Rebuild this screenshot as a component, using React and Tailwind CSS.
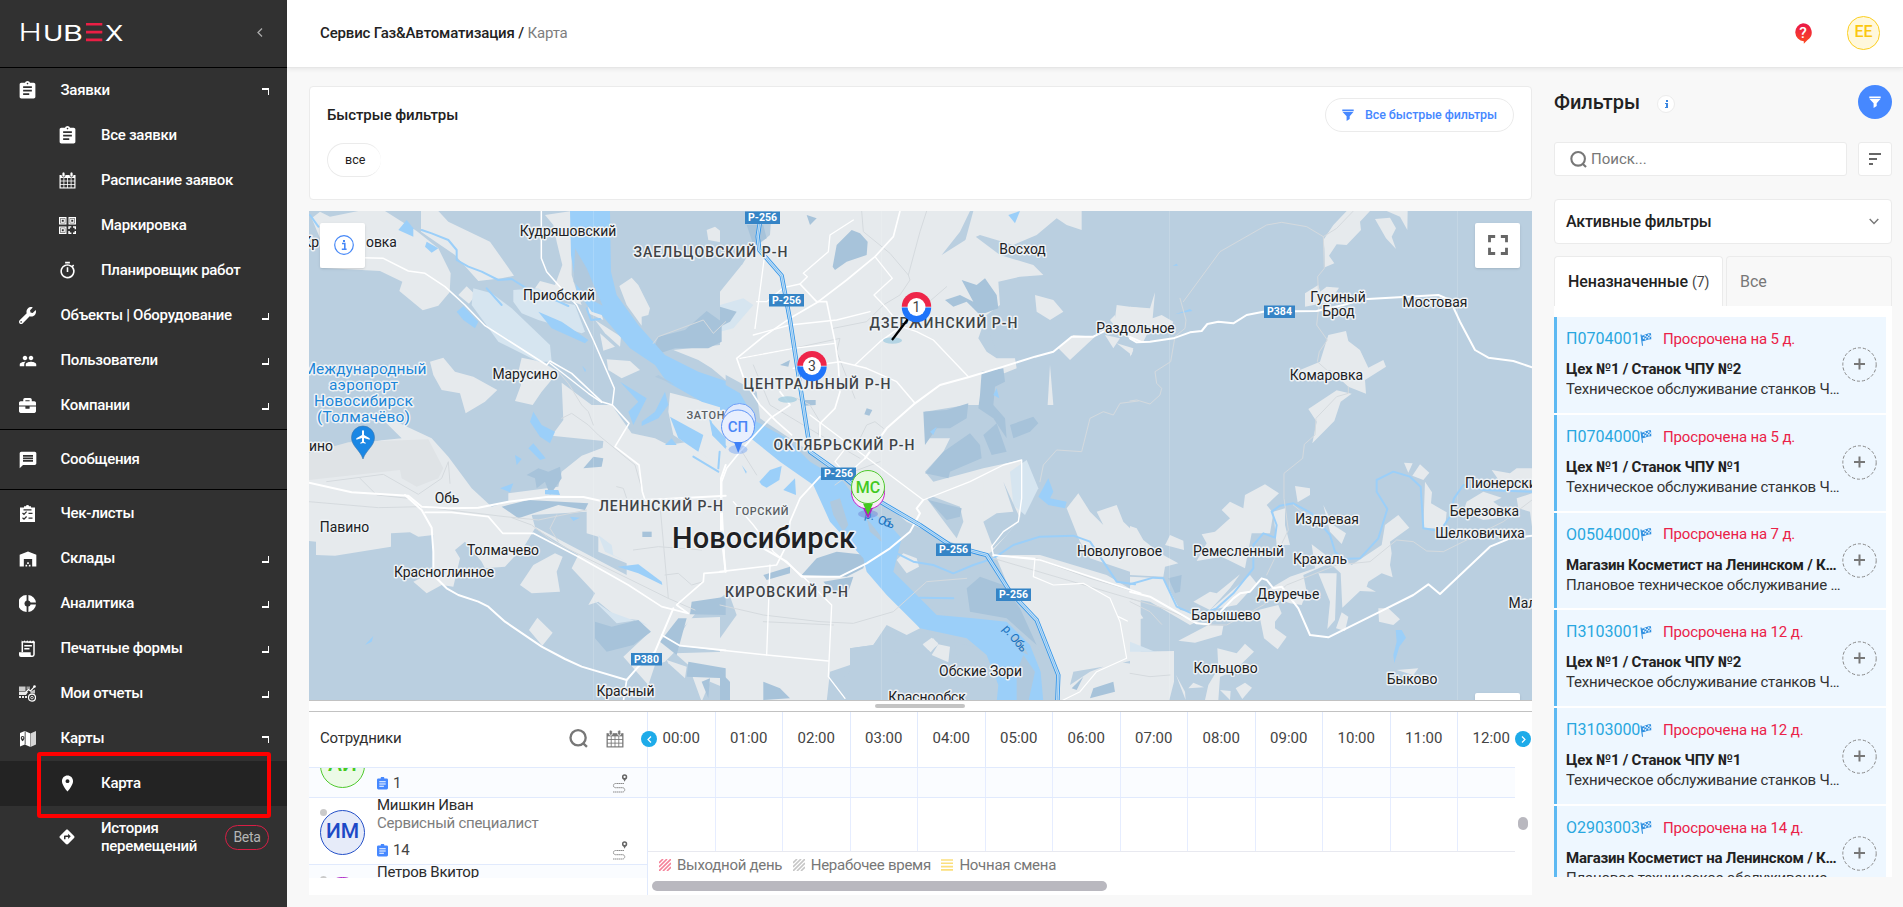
import React from "react";
import {
  MdAssignment, MdOutlineTimer, MdPeople, MdMessage, MdWarehouse, MdPlace, MdDirections, MdFullscreen, MdLocalAirport,
} from "react-icons/md";
import { FaWrench, FaBriefcase } from "react-icons/fa";

/* ---------- icons ---------- */
const Svg = ({ s = 17, vb = "0 0 17 17", className = "", children }) => (
  <svg width={s} height={s} viewBox={vb} className={`shrink-0 ${className}`} fill="currentColor">{children}</svg>
);
const CalendarIcon = ({ s = 17, hole = "#313131" }) => (
  <Svg s={s}>
    <path d="M.5 3h16v13.500H.5z" />
    <rect x="3" y="0" width="3" height="5" rx="1.500" stroke={hole} strokeWidth=".8" />
    <rect x="11" y="0" width="3" height="5" rx="1.500" stroke={hole} strokeWidth=".8" />
    <g fill={hole}>
      {[6, 9.4, 12.8].map((y) => [1.7, 5.3, 8.9, 12.5].map((x) => <rect key={`${x}-${y}`} x={x} y={y} width="2.800" height="2.600" />))}
    </g>
  </Svg>
);
const QrIcon = () => (
  <Svg>
    {[[0, 0], [9.5, 0], [0, 9.5]].map(([x, y]) => (
      <g key={`${x}${y}`}>
        <rect x={x + 0.6} y={y + 0.6} width="6.300" height="6.300" fill="none" stroke="currentColor" strokeWidth="1.200" />
        <rect x={x + 2.2} y={y + 2.2} width="3.100" height="3.100" fill="none" stroke="currentColor" strokeWidth="1.100" />
      </g>
    ))}
    <path d="M9.300 9.300h3v1.300h-1.500v1.500H9.300zM14 9.300h3v3h-1.400v-1.500H14zM9.300 14h1.500v1.500h1.600V17H9.300zM15.600 14H17v3h-3v-1.400h1.600z" />
  </Svg>
);
const ChecklistIcon = () => (
  <Svg>
    <path d="M1 2.500h4V1.300h1.800a1.800 1.800 0 0 1 3.400 0H12v1.200h4V17H1z" />
    <g fill="none" stroke="#313131" strokeWidth="1.200">
      <path d="M4.500 4.800h8M3.500 8l1.500 1.400L7.600 6.700M3.500 12.800L5 14.200l2.600-2.700M9.500 8.400h4M9.500 13.200h4" />
    </g>
  </Svg>
);
const DonutIcon = () => (
  <Svg>
    <path d="M7.600 0v5.400a3.300 3.300 0 0 0 0 6.200V17A8.500 8.500 0 0 1 7.600 0zM9.400 0A8.500 8.500 0 0 1 17 7.600h-5.400a3.300 3.300 0 0 0-2.200-2.200zM9.400 17A8.500 8.500 0 0 0 17 9.400h-5.400a3.300 3.300 0 0 1-2.200 2.200z" />
  </Svg>
);
const FormIcon = () => (
  <Svg>
    <path fill="none" stroke="currentColor" strokeWidth="1.500" d="M3.300 12V2M15 2v12.500a1.700 1.700 0 0 1-1.700 1.700H3" />
    <path d="M2.600 2.600V.5l1.500 1L5.500.5l1.400 1 1.400-1 1.500 1 1.400-1 1.500 1 1.400-1 1.600 1v1.800zM5.300 5h7.600v1.500H5.300zM5.300 8h5.200v1.500H5.300zM0 12.300h11.700v2.500c0 .8.6 1.200 1.200 1.200v1H2a2 2 0 0 1-2-2z" />
  </Svg>
);
const ReportIcon = () => (
  <Svg>
    <path opacity=".75" d="M0 1.500h6.500v5H0z" />
    <path d="M0 7h9L7 10H0zM0 11h2v2H0zM3 11h2v2H3zM6 11h2v2H6z" opacity=".9" />
    <path d="M7.500 1.500H11v3H7.500z" opacity=".5" />
    <path d="M6.500 7.500l3-3 2 1.500 4-4.300" fill="none" stroke="currentColor" strokeWidth="1.200" />
    <circle cx="15.500" cy="1.500" r="1.300" />
    <path d="M11.500 6.500l4.500-2v4h-4.500z" opacity=".7" />
    <circle cx="13" cy="12.600" r="3.500" fill="none" stroke="currentColor" strokeWidth="1.200" />
    <circle cx="13" cy="12.600" r="1.300" fill="none" stroke="currentColor" strokeWidth=".8" />
  </Svg>
);
const MapIcon = () => (
  <Svg>
    <path d="M1 3l4.800-2v13.500L1 16.500z" />
    <path d="M5.800 1l5.700 2.500V17l-5.700-2.500z" />
    <path d="M12 3.200L17 1v13.500l-5 2.200z" opacity=".8" />
    <path d="M6.300 1.500v13" stroke="#313131" strokeWidth=".7" />
    <path d="M3.600 6a1.900 1.900 0 0 1 1.900 1.900c0 1.300-1.900 3.300-1.900 3.300S1.700 9.200 1.700 7.900A1.900 1.900 0 0 1 3.600 6z" fill="#313131" />
    <circle cx="3.600" cy="7.900" r=".8" />
  </Svg>
);
const Funnel = ({ s = 12 }) => (
  <Svg s={s} vb="0 0 12 12"><path d="M.3.5h11.400v1.700H.3zM.6 3h10.800L7.700 7.300v2.800L4.600 12V7.300z" /></Svg>
);
const SearchIcon = ({ s = 18 }) => (
  <Svg s={s} vb="0 0 18 18"><g fill="none" stroke="currentColor" strokeWidth="2.200"><circle cx="8.600" cy="8.300" r="7.200" /><path d="M13 13.200l4 3.800" /></g></Svg>
);
const FlagIcon = () => (
  <Svg s={13} vb="0 0 13 13">
    <path d="M1 1.500L2.500 12.800" stroke="#2f8fe0" strokeWidth="1.100" fill="none" />
    <path d="M1.200 2.500C4 2.800 6 .3 11 .3l.3 6C7 6.300 5 8.300 2 8.300z" fill="#2f8fe0" />
    <path d="M4.300 2.300l1.500-.6.300 1.500-1.500.6zM7.800 1.200l1.500-.3.200 1.500-1.500.3zM2.700 4.300l1.500-.4.300 1.500-1.500.5zM6.200 3.200l1.600-.5.300 1.500-1.600.5zM9.500 2.400l1.300-.2.200 1.600-1.300.1zM4.700 5.400l1.500-.6.200 1.500-1.500.6zM8.100 4.200l1.500-.3.200 1.500-1.500.3z" fill="#eef7ff" />
  </Svg>
);
const RouteIcon = () => (
  <svg width="16" height="19" viewBox="0 0 16 19" fill="none" stroke="#8b8b8b" strokeWidth="1" className="shrink-0">
    <circle cx="12.600" cy="2.900" r="1.900" strokeWidth="1.500" stroke="#666" />
    <path d="M11.200 4.800l1.400 3 1.400-3z" fill="#666" stroke="none" />
    <path d="M12 9.500H3.500a2 2 0 0 0 0 4.200H11a2.200 2.200 0 0 1 0 4.300H1" strokeDasharray="1.600 .4" />
  </svg>
);

/* ---------- sidebar ---------- */
const Row = ({ icon, label, sub, arrow, active }) => (
  <div className={`flex h-[45px] shrink-0 items-center ${sub ? "pl-[59px]" : "pl-[19px]"} pr-[18px] ${active ? "bg-[#232323]" : ""}`}>
    <span className="flex w-[17px] justify-center">{icon}</span>
    <span className={`flex-1 whitespace-nowrap ${sub ? "pl-[25px]" : "pl-[24.500px]"}`}>{label}</span>
    {arrow && <span className={`mt-px h-[7px] w-[7px] border-white ${arrow === "open" ? "border-r border-t-2" : "border-b-2 border-r"}`} />}
  </div>
);

function Sidebar() {
  return (
    <aside className="relative flex w-[287px] shrink-0 flex-col bg-[#313131] text-[15px] font-medium tracking-[-0.28px] text-white">
      <div className="flex h-[68px] shrink-0 items-center justify-between border-b border-black pl-5 pr-[24px]">
        <svg width="104" height="26" viewBox="20 19 104 26" className="-mt-[3px] overflow-visible" fontFamily="Inter, sans-serif" fill="#fff">
          <text x="18.500" y="41.200" fontSize="24.500" fontWeight="300" textLength="23" lengthAdjust="spacingAndGlyphs">H</text>
          <text x="43" y="41.200" fontSize="21.500" fontWeight="400" textLength="20" lengthAdjust="spacingAndGlyphs">U</text>
          <text x="63" y="41.200" fontSize="21.500" fontWeight="400" textLength="19.500" lengthAdjust="spacingAndGlyphs">B</text>
          <g fill="#ea1f45"><path d="M86 23h16.300v2.600H86zM86 30.800h16.300v2.600H86zM86 38.600h16.300v2.600H86z" /></g>
          <text x="105" y="41.200" fontSize="21.500" fontWeight="400" textLength="18" lengthAdjust="spacingAndGlyphs">X</text>
        </svg>
        <svg width="6" height="9" viewBox="0 0 6 9" fill="none" stroke="#aaa" strokeWidth="1.300" className="-mt-[3px]"><path d="M5 .5L1 4.500l4 4" /></svg>
      </div>
      <Row icon={<MdAssignment size={21} className="shrink-0" />} label="Заявки" arrow="open" />
      <Row sub icon={<MdAssignment size={21} className="shrink-0" />} label="Все заявки" />
      <Row sub icon={<CalendarIcon />} label="Расписание заявок" />
      <Row sub icon={<QrIcon />} label="Маркировка" />
      <Row sub icon={<MdOutlineTimer size={19} className="shrink-0" />} label="Планировщик работ" />
      <Row icon={<FaWrench size={17} />} label="Объекты | Оборудование" arrow="shut" />
      <Row icon={<MdPeople size={18} className="shrink-0 -scale-x-100" />} label="Пользователи" arrow="shut" />
      <Row icon={<FaBriefcase size={17} />} label="Компании" arrow="shut" />
      <div className="mt-px flex h-[61px] shrink-0 items-center border-y border-black">
        <div className="w-full"><Row icon={<MdMessage size={20} className="shrink-0" />} label="Сообщения" /></div>
      </div>
      <div className="h-px shrink-0" />
      <Row icon={<ChecklistIcon />} label="Чек-листы" />
      <Row icon={<MdWarehouse size={20} className="shrink-0" />} label="Склады" arrow="shut" />
      <Row icon={<DonutIcon />} label="Аналитика" arrow="shut" />
      <Row icon={<FormIcon />} label="Печатные формы" arrow="shut" />
      <Row icon={<ReportIcon />} label="Мои отчеты" arrow="shut" />
      <Row icon={<MapIcon />} label="Карты" arrow="open" />
      <Row sub active icon={<MdPlace size={19} className="shrink-0" />} label="Карта" />
      <div className="flex h-[62px] shrink-0 items-center pl-[58px] pr-[18px]">
        <MdDirections size={18} className="shrink-0" />
        <span className="flex-1 pl-[25px] leading-[18px]">История<br />перемещений</span>
        <span className="flex h-[25px] w-11 items-center justify-center rounded-full border border-[#d81e45] text-sm font-normal text-[#b5b5b5]">Beta</span>
      </div>
      <div className="absolute left-[37px] top-[752px] h-[66px] w-[234px] rounded-[3px] border-4 border-[#ff0000]" />
    </aside>
  );
}

/* ---------- map ---------- */
const FRAMES = { A: "translate(305 205) scale(.33333)", B: "translate(720 205) scale(.33333)", C: "translate(1130 205) scale(.33333)" };

const AREAS = [
  ["land", {
    A: [
      "20,40 45,20 75,35 160,18 240,18 335,78 400,130 437,205 434,262 400,302 353,316 283,258 292,230 225,198 45,188 45,100",
      "348,18 400,18 430,50 555,110 627,212 590,220 520,228 450,150 348,80",
      "485,244 512,270 492,296 460,270",
      "720,30 800,18 800,210 812,250 830,300 750,270 690,250 705,228 750,240 772,180 755,110 745,60",
      "375,470 415,458 450,500 505,515 577,555 540,590 482,625 465,565 410,555 385,510",
      "650,458 710,470 760,500 710,560 683,600 630,588 648,540 640,500",
      "980,218 1000,240 1035,310 1030,330 1010,335 1010,362 965,300 943,243",
      "850,305 885,312 895,345 850,325", "870,345 948,395 945,425 900,385", "885,385 930,425 895,437", "905,463 975,468 1005,495 950,520 910,495",
      "1205,75 1230,65 1262,90 1262,115 1210,105",
      "1105,435 1245,420 1262,415 1262,525 1220,490 1180,465",
      "1095,563 1200,590 1262,610 1262,815 1195,750 1105,690 1090,620",
      "12,745 230,706 290,700 210,620 380,700 430,755 500,850 560,905 610,890 610,865 760,845 770,800 830,752 893,728 895,708 740,692 775,645 770,533 860,600 920,600 980,685 1050,700 1090,720 1150,710 1262,805 1262,1190 1200,1190 1160,1240 1115,1290 1120,1330 1080,1370 1050,1380 1030,1440 955,1355 1035,1280 1000,1245 940,1240 880,1190 850,1200 870,1165 800,1090 820,1050 690,970 660,1020 600,1085 540,1090 530,1070 480,1010 450,1035 465,1060 445,1145 410,1140 365,1165 325,1130 385,1100 385,990 340,995 315,982 258,985 258,1025 90,1052 33,1050 33,1010 12,1008",
      "645,1140 685,1080 750,1045 773,1055 755,1100 765,1160 680,1165",
      "697,1238 743,1283 712,1322 672,1275",
      "1110,1345 1262,1340 1262,1450 1215,1430 1190,1490 1150,1380", "1085,1365 1145,1385 1140,1420 1090,1375", "1120,1300 1155,1240 1262,1235 1262,1340 1110,1320",
    ],
    B: [
      "155,18 750,18 720,80 665,150 760,90 840,150 940,180 970,210 900,215 835,230 840,300 800,330 775,400 800,440 830,460 885,460 890,490 790,530 780,600 740,600 615,620 615,700 690,700 670,740 615,800 640,830 790,790 905,765 910,840 900,940 860,990 815,1040 780,1060 690,1010 560,950 490,890 400,830 270,740 120,640 110,560 0,500 0,330 60,300 100,250 60,190 90,140 150,90",
      "0,260 65,180 110,240 100,300 40,380 60,440 0,460",
      "760,18 1085,18 1085,75 1040,60 1010,40 950,90 880,120 780,90 735,110",
      "0,600 60,650 240,800 300,830 400,1000 500,1140 600,1270 560,1290 500,1260 460,1320 390,1330 390,1380 330,1400 320,1490 0,1490",
      "815,1050 960,1050 1160,1110 1262,1170 1262,1360 1180,1380 1060,1400 1050,1440 1110,1400 1190,1370 1262,1380 1262,1490 1020,1490 1010,1390 950,1240 870,1170",
      "1190,300 1262,310 1262,400 1180,380", "945,270 1000,285 1030,320 990,345 950,320", "1015,430 1060,390 1125,395 1050,465",
      "983,600 990,480 1000,600", "1155,390 1200,400 1180,430", "1190,415 1240,430 1235,450", "1170,345 1185,330 1190,370",
      "1040,910 1075,865 1110,920 1150,960 1130,920 1190,900 1210,950 1262,1000 1262,1110 1230,1100 1110,1060 1080,1010",
      "530,1065 590,1060 595,1090 560,1105", "610,1320 640,1300 655,1320 635,1345", "635,1355 660,1320 690,1330 680,1370", "550,1350 590,1370 600,1440 520,1420",
      "615,880 790,830 790,950 710,1000 650,940",
    ],
    C: [
      "580,105 610,60 650,18 720,18 690,50 693,75 650,120 620,118 597,152 613,175 585,187 583,130", "735,42 780,38 798,70 785,95 798,132 768,100", "770,18 833,18 832,75 810,35",
      "0,305 60,310 75,262 68,340 95,330 130,350 120,375 60,370 40,410 0,405",
      "525,265 565,240 570,260 590,245 627,248 600,290 525,305", "0,435 10,435 0,455",
      "595,390 648,378 655,408 690,435 715,488 760,465 768,485 705,525 708,566 655,545 600,495 515,520 510,495 570,470",
      "535,612 620,556 665,566 632,590 613,648 547,715 560,650",
      "822,773 848,775 835,803", "870,778 898,803 880,825 847,812", "885,830 906,862 903,895 950,922 945,970 880,970",
      "1085,795 1140,805 1160,790 1206,790 1206,850 1140,855 1110,830", "1010,890 1060,860 1115,878 1090,890 1110,905 1100,940 1060,945 1000,920", "1160,880 1206,865 1206,965 1200,920 1165,910",
      "495,843 540,850 540,870 503,892", "275,915 300,890 340,910 345,870 405,838 447,865 410,900 430,925 420,985 365,985 345,1090 275,1055 200,1068 230,1015 215,988 255,980 300,940",
      "430,920 465,910 465,960 480,1020 440,1020", "108,1015 120,990 160,1007 162,1035 105,1020",
      "0,963 20,970 40,1005 90,1045 145,1075 105,1085 100,1115 0,1110", "0,1115 100,1120 150,1215 215,1225 230,1235 180,1260 60,1190 0,1180", "0,1180 40,1240 0,1250",
      "190,1190 240,1160 260,1165 330,1108 300,1150 240,1215", "240,1215 360,1110 380,1135 320,1200",
      "145,1307 235,1260 280,1262 275,1290 195,1313", "385,1215 445,1200 455,1225 435,1250 435,1270 470,1295 443,1333 402,1300",
      "395,1165 480,1115 555,1090 545,1018 600,1060 625,1050 665,1080 755,1020 765,960 805,930 838,968 780,1010 785,1045 780,1080 788,1117 755,1105 715,1130 710,1145 738,1160 690,1158 637,1208 632,1105 600,1075 520,1110 530,1160 515,1200 480,1195",
      "565,1105 620,1105 615,1245 592,1272 600,1190", "635,1222 655,1235 645,1278 618,1270", "745,1210 775,1210 810,1243 790,1260 747,1250",
      "580,900 610,960 648,985 635,1017 600,980",
      "262,1330 320,1345 345,1316 372,1340 310,1400 270,1415 265,1485 225,1485 235,1440 265,1390", "175,1450 190,1433 222,1447", "270,1455 302,1458 300,1485", "317,1450 345,1433 366,1448 337,1482",
      "0,1340 132,1338 132,1430 118,1485 0,1485", "138,1410 165,1460 167,1485", "800,1395 865,1390 850,1410",
    ],
  }],
  ["light", {
    A: ["505,250 560,265 620,310 735,420 740,470 700,470 580,410 540,355 500,300", "625,255 700,250 760,290 810,300 840,380 830,385 750,360 700,345 650,325 625,290", "865,1185 915,1220 1030,1262 1000,1245 935,1255", "880,990 920,1020 925,1050 965,1070 900,1040"],
    B: ["870,800 920,765 955,850 915,930 880,900", "525,1010 550,1000 690,1040 640,1060 600,1050 560,1050", "0,300 70,280 100,300 40,370 0,380"],
    C: ["0,1310 75,1340 0,1340"],
  }],
  ["base", {
    A: ["680,930 845,920 845,985 880,995 880,1040 965,1075 965,1110 690,965"],
    B: ["0,18 155,18 150,60 60,160 20,200 0,200", "620,880 640,875 720,905 730,950 710,1000", "790,950 830,925 880,920 850,830 900,940 860,990 820,1030", "520,980 690,1010 830,1060 880,1180 940,1240 970,1350 900,1270 700,1240 620,1200 520,1100", "790,340 830,330 830,440", "0,1300 50,1230 25,1160 0,1180", "700,1310 780,1330 830,1430 830,1490 740,1490 720,1400", "390,1330 460,1320 500,1265 530,1280 520,1340 580,1350 640,1330 700,1290 720,1400 700,1490 320,1490 350,1430 390,1400"],
    C: [],
  }],
  ["land2", {
    A: [],
    B: ["530,1065 550,1045 590,1060 597,1085 560,1105", "608,1318 635,1298 655,1315 632,1342", "635,1350 655,1318 690,1325 685,1372"],
    C: [],
  }],
  ["dark", {
    A: ["590,905 670,885 850,895 840,915 760,900 640,940", "870,1250 920,1265 1000,1245 1038,1280 985,1320 905,1340 870,1300", "835,790 865,755 895,760 890,785", "665,810 700,790 730,800 765,785 770,820 735,870 720,830 695,850 690,820", "1160,1190 1262,1175 1262,1230 1155,1228", "1150,1370 1262,1390 1262,1420 1145,1415", "1120,1240 1145,1240 1115,1350 1065,1310", "1050,420 1060,395 1140,375 1205,318 1250,350 1250,410 1210,430 1110,430 1070,443", "1012,980 1040,980 1040,996 1012,996", "1190,1430 1215,1420 1210,1480"],
    B: ["350,120 395,75 420,85 443,110 440,150 380,170 345,195 338,185", "675,285 720,270 760,290 725,225 770,240 795,220 830,270 835,310 780,330 740,290 700,305", "610,620 680,615 745,595 740,640 690,670 650,670 615,720", "670,740 750,685 780,720 785,760 690,800 685,820 615,805", "790,690 830,655 860,740 815,750", "870,660 940,635 955,655 930,680 880,700", "785,500 850,490 855,530 825,545 820,600 855,640 860,700 820,640 775,610 780,570", "245,1110 290,1060 350,1040 440,1050 430,1090 380,1115", "740,1150 780,1115 850,1140 900,1210 950,1320 860,1240 750,1220", "310,1130 400,1115 380,1175 340,1165", "0,305 50,320 30,350 0,365", "130,1110 210,1085 210,1105 140,1125", "440,610 457,615 448,632 433,628", "180,480 210,465 205,485", "255,585 287,585 287,600 255,602", "1055,1450 1090,1415 1070,1455", "1120,1450 1180,1430 1185,1460 1110,1480", "0,1400 30,1430 30,1490 0,1490", "130,1430 180,1450 210,1480 130,1485", "625,885 725,910 720,935 680,945", "80,60 130,60 140,100 100,120", "260,30 290,40 270,60"],
    C: ["115,1120 155,1110 150,1160 135,1165"],
  }],
  ["water", {
    A: ["795,18 915,18 918,200 935,270 1000,360 1080,450 1180,500 1262,528 1262,612 1190,590 1085,530 1050,480 975,430 890,330 860,320 815,255 798,150", "455,320 475,303 520,350 510,370 475,345", "945,530 1025,580 985,660 970,620 1000,590", "1010,650 1050,620 1080,560 1090,600 1060,640 1010,663", "1095,635 1195,690 1180,740 1120,700", "670,730 685,715 722,760 705,765", "630,750 650,762 635,780", "685,620 710,660 750,680 735,715 705,695 675,650", "585,850 625,835 615,862", "938,1085 1000,1078 1070,1130 1072,1140 1000,1105", "305,45 325,70 325,95 280,75", "365,110 400,130 380,143 360,125", "720,855 760,855 765,870 720,868", "700,320 770,350 850,405 840,415 740,370", "1080,720 1100,700 1115,720", "1218,650 1262,700 1262,732 1222,690", "180,1320 205,1293 200,1310", "832,482 843,495 840,502", "795,935 825,938 805,948"],
    B: ["0,530 60,565 110,650 200,700 270,770 370,830 430,910 500,950 545,1000 520,1100 600,1180 650,1230 760,1240 860,1250 930,1320 962,1400 970,1490 830,1490 835,1440 800,1350 740,1300 600,1270 500,1170 440,1100 430,1060 330,950 280,840 180,770 80,690 0,615", "118,830 150,795 185,783 178,825 140,848 125,840", "190,855 225,820 228,870", "955,875 985,820 1000,860 990,880 1040,890 1035,910 985,900", "865,30 900,18 885,55", "65,780 80,800 78,806", "820,570 830,550 838,580", "630,680 650,665 640,690"],
    C: ["797,1275 815,1275 828,1298 808,1325 793,1375 790,1350 800,1310", "128,182 140,176 144,182", "135,328 180,312 187,318"],
  }],
  ["island", {
    A: ["810,130 845,190 893,302 850,280 806,230", "1060,510 1110,540 1050,515"],
    B: ["330,890 360,880 385,960 370,980 340,930", "440,940 480,990 485,1010 450,980", "910,1350 945,1400 925,1490 890,1490 890,1400", "870,1290 900,1300 925,1350 905,1340"],
    C: [],
  }],
];
const FILL = { land: "#e6eaed", light: "#d6e5f0", base: "#bacfe0", land2: "#e6eaed", dark: "#a7c3da", water: "#9bcff9", island: "#b0c9de" };

const STREAMS = {
  A: ["350,75 380,85 430,105 455,135 455,165 490,185 530,200 580,225 620,222 665,250", "700,262 790,303", "15,30 40,65", "1215,640 1225,690 1262,725", "1165,755 1240,800", "1244,740 1240,790", "845,310 858,345 885,342", "545,250 590,300"],
  B: ["520,1040 580,1070 640,1080 700,1105 760,1080 820,1060 880,1020 960,995 1060,992 1110,1010 1150,1070 1190,1130 1245,1138", "600,1178 700,1180"],
  C: ["0,1138 70,1118 100,1120 140,1205 200,1232 260,1210 310,1165 370,1090 370,1020 400,985 435,998 440,960 425,920 450,902 490,895 545,925 600,990 615,1040 640,1062 690,1060 745,1000 772,912 740,860 740,825 790,800 840,815 872,845 880,970 930,978 960,935 972,880 1000,840 1060,855 1206,860"],
};
const RAILS = {
  A: ["65,830 235,808 340,868 410,820 430,770 435,835", "165,820 215,870 310,880", "12,890 220,908 350,905 600,935 700,945 845,915", "620,938 680,960 745,1010 1090,1180 1170,1215", "770,640 800,625 850,660 880,690 990,780 1010,850", "760,500 790,535 830,600 850,620 865,660", "1090,1180 1065,900", "1080,1110 1120,1105 1160,1140 1195,1130", "985,1035 1060,1025 1190,1035", "1045,415 1060,395 1195,345 1225,385 1262,350", "935,845 955,850 965,880", "755,930 735,970 760,1010"],
  B: ["425,18 430,80 510,145 565,210 600,80 620,18", "565,210 570,225 540,270 490,300 440,350 340,370", "570,340 680,245", "60,460 220,430 360,400 350,440 405,580", "100,480 150,600 300,690 420,760", "0,1200 130,1230 300,1250 400,1255 520,1220 620,1130 740,1120", "130,1250 340,1260", "295,690 300,650 270,600 230,580", "420,700 440,660 465,650 490,670", "820,1060 1262,1190", "945,1060 1110,1120 1262,1165", "960,830 970,780 1010,735 1085,740 1110,640 1150,620 1180,630 1200,595 1255,588", "345,840 400,800 480,770", "110,810 60,730"],
  C: ["160,290 270,140 410,60 455,52 530,65 580,95 620,70 670,18", "150,280 168,345 165,370 135,395 122,470 75,500 80,535 95,550 90,570 60,597 20,585 0,588", "580,95 583,190 563,215 567,300 560,360 592,405 568,440 562,470 590,495", "655,545 655,565 620,575 558,640 555,690 523,718 518,760 462,805 462,880 475,975 410,1110", "1206,885 1120,950 1000,1010 940,1040 890,1038 850,1010 800,1005 720,1070 620,1080 470,1140 400,1200 290,1260 220,1260 100,1210 0,1180", "0,1190 60,1220 95,1258", "490,900 545,945", "0,1405 60,1415 120,1410"],
};
const ROADS = {
  A: [
    ["50,155 235,160 310,198 360,205 420,245 480,300 540,362 600,400 725,480 735,468 800,505 890,590 922,600 928,550 865,405 815,300 760,240 725,200 709,160 709,18", 4.5],
    ["735,475 850,565 890,592", 4],
    ["922,600 972,655 930,725 1002,780 1012,860 1020,885", 5],
    ["12,833 140,862 310,872 350,905 430,910 520,908 610,890 730,875 835,876 900,890 1080,882 1262,872", 6],
    ["300,870 350,915 380,968 385,1040 385,1110 425,1150 460,1170 520,1190 550,1205 600,1250 710,1325 780,1362 830,1385 965,1425 1000,1385 1050,1340 1105,1210", 6],
    ["360,922 440,922 550,935 593,985 685,985 820,1055 970,1140 1070,1205 1150,1225 1115,1200 1195,1130 1197,1105 1262,1100", 5],
    ["1070,1290 1125,1322 1262,1336", 5], ["965,1425 955,1490", 5], ["1262,780 1248,820 1248,980 1262,1100", 6],
  ],
  B: [
    ["540,18 520,95 465,155 380,225 295,290 210,340 130,395 50,460 75,530 120,600 170,650 215,690", 5],
    ["400,45 330,90 325,140 250,205 262,215 240,237 190,248 140,290 110,290", 4], ["132,165 105,370", 4], ["240,237 290,290 320,290 345,410 355,480 360,560 345,610 300,655 300,700", 5],
    ["465,155 517,220 462,270 500,310 545,365 590,380 640,405 745,515", 4], ["100,390 210,360 350,345 450,320", 4], ["60,460 220,430 345,415", 4],
    ["220,490 360,470 440,490 530,530 585,595", 4.5], ["565,350 480,410 405,480", 4], ["435,760 500,670 585,595 660,540 750,515 850,485 945,455 1000,440 1055,395 1120,395 1170,370 1262,410", 6],
    ["435,760 380,810 345,770 400,700", 4], ["180,560 210,600 150,640 60,740 20,790 5,830 5,900 15,1095", 5], ["270,630 350,690 470,780 610,885 750,830 850,780 905,765 905,880 895,950 850,980 815,1025 820,1050", 4],
    ["610,885 590,910 600,925 570,980 510,1030 440,1075 360,1115 245,1115 200,1070 130,1030", 6], ["300,815 240,880 210,950 205,1010 170,1080 0,1100", 5], ["40,890 100,960 160,1040 250,1115 335,1200 325,1415 375,1480", 4], ["0,1335 140,1350 325,1368", 4], ["150,1080 140,1350", 4], ["820,1050 945,1060 940,1115 1000,1140 1090,1135 1170,1180 1200,1250 1220,1360 1130,1400 1080,1460 1020,1490", 3.5], ["820,1050 960,1065 1262,1165", 5], ["1195,1235 1222,1248", 4],
  ],
  C: [
    ["0,400 20,412 60,410 130,400 180,382 215,378 232,357 265,350 310,355 350,330 400,320 560,318 640,300 700,283 925,270 960,285 990,350 1035,435 1075,458 1150,468 1206,487", 6],
    ["0,1160 60,1175 200,1255 235,1258 310,1180 330,1165 360,1160 395,1120 410,1125 430,1150 455,1145 505,1210 540,1290 595,1297 740,1225 850,1170 895,1138 930,1167 1080,1025 1140,1000 1206,992", 6],
  ],
};
const HIGHWAY = ["120,50 113,95 118,135 185,212 210,345 240,540 265,700 270,740 340,790 400,840 480,890 600,960 690,1020 780,1045 800,1050 870,1160 950,1245 1015,1410 1012,1490"];

const TOWNS = [
  ["Кр", 319, 246.5, "end"], ["овка", 366, 246.5, "start"], ["Кудряшовский", 568, 235.5], ["Приобский", 559, 299.5], ["Марусино", 525, 379], ["ино", 309, 451, "start"],
  ["Обь", 447, 502.5], ["Павино", 344.5, 532], ["Толмачево", 503, 555], ["Красноглинное", 444, 577], ["Красный", 625.5, 695.5], ["Восход", 1022.5, 253.5],
  ["Раздольное", 1135.5, 333], ["Новолуговое", 1119.5, 555.5], ["Обские Зори", 980.5, 676], ["Краснообск", 927, 701.5], ["Гусиный", 1338, 302], ["Брод", 1338.5, 316],
  ["Мостовая", 1435, 306.5], ["Комаровка", 1326.5, 380], ["Пионерский", 1465, 487.5, "start"], ["Березовка", 1484.5, 516], ["Шелковичиха", 1480, 538],
  ["Издревая", 1327, 523.5], ["Ремесленный", 1238.5, 555.5], ["Крахаль", 1320, 563.5], ["Двуречье", 1288, 598.5], ["Барышево", 1226, 620], ["Кольцово", 1225.5, 673],
  ["Быково", 1412, 683.5], ["Маленькая", 1508.5, 607.5, "start"],
];
const DISTRICTS = [
  ["ЗАЕЛЬЦОВСКИЙ Р-Н", 633.5, 256.5, 154], ["ДЗЕРЖИНСКИЙ Р-Н", 869.5, 328, 148], ["ЦЕНТРАЛЬНЫЙ Р-Н", 743.5, 388.5, 147], ["ОКТЯБРЬСКИЙ Р-Н", 773.5, 449.5, 141],
  ["ЛЕНИНСКИЙ Р-Н", 599, 510.5, 124], ["КИРОВСКИЙ Р-Н", 725, 597, 123],
];
const SHIELDS = [["Р-256", 745, 211.5], ["Р-256", 769, 294], ["Р-256", 821, 467.5], ["Р-256", 936, 543.5], ["Р-256", 996, 588.5], ["Р380", 631, 653], ["Р384", 1264, 305.5]];

const Frames = ({ render }) => Object.entries(FRAMES).map(([k, t]) => <g key={k} transform={t}>{render(k)}</g>);

const Cluster = ({ x, y, n }) => (
  <g transform={`translate(${x} ${y})`}>
    <path d="M-14.700 -.3a14.700 14.700 0 0 1 29.400 0z" fill="#ee2549" />
    <path d="M-14.700 .5a14.700 14.700 0 0 0 29.400 0z" fill="#1f74fa" />
    <circle r="9" fill="#fff" />
    <text y="5" fontSize="14" textAnchor="middle" fill="#444">{n}</text>
  </g>
);

function MapView() {
  return (
    <div className="relative h-[489px] shrink-0 overflow-hidden bg-[#bacfe0]">
      <svg width="1223" height="489" viewBox="309 211 1223 489" fontFamily="Roboto, sans-serif" className="block">
        {AREAS.map(([kind, byFrame]) => (
          <g key={kind} fill={FILL[kind]}>
            <Frames render={(k) => byFrame[k].map((p) => <polygon key={p} points={p} />)} />
          </g>
        ))}
        <polygon points="12,745 130,712 370,703 415,790 400,820 335,845 290,820 285,795 12,825" transform={FRAMES.A} fill="#dfe3e6" />
        <path d="M593.500 211v489M881.500 211v489M1169.500 211v489M1457.500 211v489" stroke="#fff" strokeOpacity=".15" />
        <g fill="none" strokeLinejoin="round" strokeLinecap="round">
          <Frames render={(k) => STREAMS[k].map((p) => <polyline key={p} points={p} stroke="#9bcff9" strokeWidth="6" />)} />
          <Frames render={(k) => RAILS[k].map((p) => <polyline key={p} points={p} stroke="#d5dade" strokeWidth="3" />)} />
          <Frames render={(k) => ROADS[k].map(([p, w]) => <polyline key={p} points={p} stroke="#fff" strokeWidth={w} />)} />
          <g transform={FRAMES.B}>
            {HIGHWAY.map((p) => (
              <g key={p}>
                <polyline points={p} stroke="#2f93e8" strokeWidth="13" />
                <polyline points={p} stroke="#c4e0f6" strokeWidth="8" />
                <polyline points={p} stroke="#6fb3ec" strokeWidth="2" />
              </g>
            ))}
          </g>
        </g>

        <g stroke="#eef2f5" strokeWidth="3" strokeLinejoin="round" paintOrder="stroke">
          <g fontSize="13.900" fill="#202124">
            {TOWNS.map(([t, x, y, a]) => <text key={t + x} x={x} y={y} textAnchor={a || "middle"}>{t}</text>)}
          </g>
          <g fontSize="14" fontWeight="500" fill="#3f4347">
            {DISTRICTS.map(([t, x, y, w]) => <text key={t} x={x} y={y} textLength={w}>{t}</text>)}
          </g>
          <g fontSize="11" fontWeight="500" fill="#5a5f64">
            <text x="686.500" y="419" textLength="38">ЗАТОН</text>
            <text x="735.500" y="514.500" textLength="53">ГОРСКИЙ</text>
          </g>
          <text x="672" y="547.500" fontSize="29" fontWeight="500" fill="#202124" textLength="183">Новосибирск</text>
          <g fontSize="15.500" fill="#1c86d8" textAnchor="middle">
            <text x="426.500" y="374" textAnchor="end" textLength="124">Международный</text>
            <text x="363.500" y="390" textLength="69">аэропорт</text>
            <text x="363.500" y="405.500" textLength="99">Новосибирск</text>
            <text x="363.500" y="421.500" textLength="93">(Толмачёво)</text>
          </g>
        </g>
        <g fontSize="12" fill="#1a73c0">
          <text transform="translate(864 518) rotate(12)">р.</text>
          <text transform="translate(877 523) rotate(20)" textLength="17">Обь</text>
          <text transform="translate(1002 629) rotate(50)" textLength="31">р. Обь</text>
        </g>
        {SHIELDS.map(([t, x, y]) => {
          const w = t.length > 4 ? 35 : 31;
          return (
            <g key={`${x}`}>
              <rect x={x} y={y} width={w} height="12.500" fill="#3584c6" />
              <text x={x + w / 2} y={y + 9.9} fontSize="10.500" fontWeight="700" fill="#fff" textAnchor="middle">{t}</text>
            </g>
          );
        })}

        <path transform="translate(363 438)" d="M0 21C-3 12-11.500 8-11.500-.5a11.500 11.500 0 0 1 23 0C11.500 8 3 12 0 21z" fill="#1a87e4" stroke="#3b76ad" strokeWidth=".6" />
        <MdLocalAirport x="355" y="429" size={16} color="#fff" />

        <ellipse cx="892.500" cy="340.500" rx="9.500" ry="3.200" fill="#a9d0e2" opacity=".85" />
        <ellipse cx="787.500" cy="399.500" rx="9.500" ry="3.200" fill="#a9d0e2" opacity=".85" />
        <path d="M908 319L892 340" stroke="#000" strokeWidth="2.200" />
        <Cluster x={916.5} y={307} n="1" />
        <Cluster x={812} y={366} n="3" />

        <ellipse cx="738" cy="449.500" rx="9.500" ry="4.500" fill="#4d8bf5" opacity=".35" />
        <circle cx="739.500" cy="419.500" r="16" fill="#dfe9fc" stroke="#6e9ff8" />
        <circle cx="738" cy="426.500" r="16.500" fill="#e8effe" stroke="#5b92f8" />
        <path d="M734 442h8.500L738.200 453z" fill="#3f80f7" />
        <text x="738" y="431.500" fontSize="15" fontWeight="500" fill="#4a86f7" textAnchor="middle">СП</text>

        <ellipse cx="868" cy="514" rx="10" ry="4" fill="#6f86d8" opacity=".5" />
        <circle cx="868" cy="492.500" r="16.500" fill="#fbe9fb" stroke="#c425c8" />
        <path d="M863 508h10L868 518.500z" fill="#b021c4" />
        <circle cx="868" cy="487" r="16.500" fill="#e8f9e2" stroke="#4fc92d" />
        <path d="M863 503.500h10L868 515z" fill="#43c91f" />
        <text x="868" y="492.500" fontSize="16" fontWeight="500" fill="#43c91f" textAnchor="middle">МС</text>
      </svg>
      <div className="absolute left-[11px] top-3 flex h-[45px] w-[45px] items-center justify-center rounded-[2px] bg-white shadow">
        <svg width="20" height="20" viewBox="0 0 20 20" fill="none" className="-mt-0.5 ml-0.5"><circle cx="10" cy="10" r="9.300" stroke="#4688f7" strokeWidth="1.200" /><path d="M8 8.500h2.800V14M7.800 14.200h4.800" stroke="#4688f7" strokeWidth="1.600" /><path d="M9 5h2v2H9z" fill="#4688f7" /></svg>
      </div>
      <div className="absolute right-3 top-3 flex h-[45px] w-[45px] items-center justify-center rounded-[2px] bg-white shadow">
        <MdFullscreen size={34} color="#666" className="-mt-0.5" />
      </div>
      <div className="absolute right-3 top-[482px] h-[45px] w-[45px] rounded-[2px] bg-white shadow" />
    </div>
  );
}

/* ---------- schedule ---------- */
const HOURS = ["00:00", "01:00", "02:00", "03:00", "04:00", "05:00", "06:00", "07:00", "08:00", "09:00", "10:00", "11:00", "12:00"];

const Employee = ({ initials, name, role, count, avatar, tint }) => (
  <div className={`relative flex h-[67px] shrink-0 border-b border-[#e1eafd] pl-[11px] ${tint ? "bg-[#fafcff]" : ""}`}>
    <div className={`mt-[11.500px] flex h-[45px] w-[45px] shrink-0 items-center justify-center rounded-full border text-[21px] font-medium ${avatar}`}>{initials}</div>
    <span className="absolute left-[11px] top-[11px] h-[7px] w-[7px] rounded-full bg-[#cacaca]" />
    <div className="-mt-0.5 flex flex-1 flex-col pl-3 text-[15px] leading-[18px] tracking-[-0.25px]">
      <span className="h-[18px] text-[#2b2b2b]">{name}</span>
      <span className="h-[18px] text-[#7d7d7d]">{role}</span>
      {count && (
        <span className="mt-[9px] flex items-center gap-[5px] text-[#444]">
          <svg width="11" height="13" viewBox="0 0 12 13"><path d="M0 2.500A1.500 1.500 0 0 1 1.500 1H4a2 2 0 0 1 4 0h2.500A1.500 1.500 0 0 1 12 2.500v9a1.500 1.500 0 0 1-1.500 1.500h-9A1.500 1.500 0 0 1 0 11.500z" fill="#4688ff" /><path d="M2.500 4.500h7M2.500 7h7M2.500 9.500h5" stroke="#fff" strokeWidth="1.100" /></svg>
          {count}
        </span>
      )}
    </div>
    <div className="mr-[19px] mt-[43px]"><RouteIcon /></div>
  </div>
);

const Legend = ({ color, flat, children }) => (
  <span className="flex items-center gap-[6px]">
    <svg width="12" height="12" viewBox="0 0 12 12" stroke={color} strokeWidth="1.600">
      {flat ? <path d="M0 1h12M0 4.300h12M0 7.600h12M0 10.900h12" /> : <path d="M0 4l4-4M0 8l8-8M0 12L12 0M4 12l8-8M8 12l4-4" />}
    </svg>
    {children}
  </span>
);

const Arrow = ({ right, className }) => (
  <span className={`absolute z-10 flex h-4 w-4 items-center justify-center rounded-full bg-[#1eabe9] ${className}`}>
    <svg width="5" height="7" viewBox="0 0 5 7" fill="none" stroke="#fff" strokeWidth="1.200"><path d={right ? "M1 .5l3 3-3 3" : "M4 .5l-3 3 3 3"} /></svg>
  </span>
);

function Schedule() {
  return (
    <div className="flex h-[183px] shrink-0 bg-white text-[15px]">
      <div className="flex w-[339px] shrink-0 flex-col border-r border-[#e1eafd]">
        <div className="flex h-14 shrink-0 items-center border-b border-[#e1eafd] pb-0.5 pl-[11px] pr-[23px] text-[#2f2f2f]">
          <span className="flex-1 tracking-[-0.22px]">Сотрудники</span>
          <span className="flex items-center gap-[18px] text-[#777]"><SearchIcon s={19} /><CalendarIcon s={18} hole="#fff" /></span>
        </div>
        <div className="flex h-[110px] flex-col justify-start overflow-hidden">
          <div className="-mt-[37px]">
            <Employee tint initials="АИ" count="1" avatar="border-[#4fc92d] bg-[#ecfae7] text-[#43c91f]" />
            <Employee initials="ИМ" name="Мишкин Иван" role="Сервисный специалист" count="14" avatar="border-[#2450c8] bg-[#e6ebf9] text-[#1d49c6]" />
            <Employee tint name="Петров Вкитор" avatar="border-[#a91fc4] bg-[#f7e8fa] text-[#a91fc4]" />
          </div>
        </div>
      </div>
      <div className="relative flex min-w-0 flex-1 flex-col">
        <Arrow className="-left-[7px] top-[19px]" />
        <Arrow right className="right-px top-[19px]" />
        <div className="w-[867px]">
          <div className="flex h-14 overflow-hidden border-b border-[#e1eafd]">
            {HOURS.map((h) => <span key={h} className="flex w-[67.500px] shrink-0 items-center justify-center border-r border-[#e1eafd] pb-0.5 text-[#444]">{h}</span>)}
          </div>
          {["h-[30px] border-[#e1eafd] bg-[#fafcff]", "h-[54px] border-[#e8e9f0]"].map((c) => (
            <div key={c} className={`flex overflow-hidden border-b ${c}`}>
              {HOURS.map((h) => <span key={h} className="w-[67.500px] shrink-0 border-r border-[#e6edff]" />)}
            </div>
          ))}
        </div>
        <div className="flex h-[26px] items-center gap-[10.500px] pl-[11px] tracking-[-0.27px] text-[#777]">
          <Legend color="#f5829a">Выходной день</Legend>
          <Legend color="#c6c6c6">Нерабочее время</Legend>
          <Legend flat color="#fbdf7c">Ночная смена</Legend>
        </div>
        <div className="ml-1 mt-[3px] h-[10px] w-[455px] rounded-full bg-[#b9b8bf]" />
        <div className="absolute right-1 top-[105px] h-[13px] w-[10px] rounded-full bg-[#b9b8bf]" />
      </div>
    </div>
  );
}

/* ---------- right panel ---------- */
const TICKETS = [
  ["П0704001", "5", "Цех №1 / Станок ЧПУ №2", "Техническое обслуживание станков ЧПУ"],
  ["П0704000", "5", "Цех №1 / Станок ЧПУ №1", "Техническое обслуживание станков ЧПУ"],
  ["О0504000", "7", "Магазин Косметист на Ленинском / Касса", "Плановое техническое обслуживание кассы"],
  ["П3103001", "12", "Цех №1 / Станок ЧПУ №2", "Техническое обслуживание станков ЧПУ"],
  ["П3103000", "12", "Цех №1 / Станок ЧПУ №1", "Техническое обслуживание станков ЧПУ"],
  ["О2903003", "14", "Магазин Косметист на Ленинском / Касса", "Плановое техническое обслуживание кассы"],
];

function Filters() {
  return (
    <div className="flex w-[338px] shrink-0 flex-col pt-[17px]">
      <div className="flex h-[34px] shrink-0 items-center">
        <h2 className="text-[20px] font-medium text-[#222]">Фильтры</h2>
        <span className="ml-[17px] mt-1 flex h-[18px] w-[18px] items-center justify-center rounded-full border border-[#ececec] bg-white">
          <svg width="3" height="8" viewBox="0 0 3 8" fill="#3a86e0"><path d="M1 0h2v2H1zM0 3h3v5H0V7h1V4H0z" /></svg>
        </span>
        <span className="ml-auto flex h-[34px] w-[34px] items-center justify-center rounded-full bg-[#4688ff] text-white"><Funnel s={12} /></span>
      </div>
      <div className="mt-[23px] flex h-[34px] shrink-0 gap-[11px]">
        <div className="flex flex-1 items-center gap-1 rounded-[3px] border border-[#ebebeb] bg-white pl-[15px] text-[#777]">
          <SearchIcon s={17} /><span className="text-[15px]">Поиск...</span>
        </div>
        <div className="flex w-[34px] items-center justify-center rounded-[3px] border border-[#ebebeb] bg-white">
          <svg width="12" height="12" viewBox="0 0 12 12" fill="#666"><path d="M0 0h12v2H0zM0 5h8v2H0zM0 10h4v2H0z" /></svg>
        </div>
      </div>
      <div className="mt-[23px] flex h-[45px] shrink-0 items-center justify-between rounded border border-[#ebebeb] bg-white pl-[11px] pr-3 text-base font-medium tracking-[-0.15px] text-[#222]">
        Активные фильтры
        <svg width="10" height="7" viewBox="0 0 10 7" fill="none" stroke="#777" strokeWidth="1.400"><path d="M.7 1L5 5.500 9.300 1" /></svg>
      </div>
      <div className="mt-3 flex h-[50px] shrink-0 gap-[3px]">
        <div className="flex w-[169px] items-center rounded-t border border-b-0 border-[#ebebeb] bg-white pl-[13px] text-base font-medium tracking-[-0.05px] text-[#222]">
          Неназначенные<span className="ml-1 pt-px text-[14px] font-normal text-[#444]">(7)</span>
        </div>
        <div className="flex flex-1 items-center rounded-t border border-b-0 border-[#ebebeb] pl-[13px] text-base text-[#777]">Все</div>
      </div>
      <div className="flex h-[571px] shrink-0 flex-col gap-[2px] overflow-hidden bg-white pr-[6px] pt-[11px]">
        {TICKETS.map(([id, days, place, work]) => (
          <div key={id} className="flex h-[95.800px] shrink-0 items-center border-l-[3px] border-[#5db9f2] bg-[#eef7ff] pl-[9px] pr-[9px]">
            <div className="flex h-full w-[276px] flex-col pt-[12px]">
              <div className="relative flex h-5 items-center">
                <span className="w-[74px] text-base text-[#29a7e0]">{id}</span>
                <FlagIcon />
                <span className="ml-[10px] whitespace-nowrap text-[15px] tracking-[-0.15px] text-[#ea2248]">Просрочена на {days} д.</span>
              </div>
              <div className="mt-[10px] truncate text-[15px] font-bold leading-5 tracking-[-0.23px] text-[#222]">{place}</div>
              <div className="truncate text-[15px] leading-5 tracking-[-0.2px] text-[#333]">{work}</div>
            </div>
            <svg width="35" height="35" viewBox="0 0 35 35" fill="none" className="ml-auto">
              <circle cx="17.500" cy="17.500" r="16.700" stroke="#888" strokeDasharray="3.200 1.900" />
              <path d="M17.500 11.500v11M12 17h11" stroke="#777" strokeWidth="2" />
            </svg>
          </div>
        ))}
      </div>
    </div>
  );
}

export default function App() {
  return (
    <div className="flex h-[907px] w-[1903px] overflow-hidden bg-[#f8f8f8] font-['Roboto',sans-serif]">
      <Sidebar />
      <div className="flex min-w-0 flex-1 flex-col">
        <header className="z-10 flex h-[68px] shrink-0 items-center border-b border-[#e6e6e6] bg-white pb-px pl-[33px] pr-[23px] shadow-[0_1px_5px_rgba(0,0,0,0.08)]">
          <div className="flex-1 text-[15px] font-medium tracking-[-0.15px] text-[#222]">Сервис Газ&amp;Автоматизация / <span className="font-normal text-[#7d7d7d]">Карта</span></div>
          <svg width="18" height="21" viewBox="0 0 18 21" className="mr-[35px]">
            <defs><linearGradient id="help" x1="0" y1="0" x2="0" y2="1"><stop offset="0" stopColor="#ea1848" /><stop offset="1" stopColor="#fb4a22" /></linearGradient></defs>
            <path d="M9 .3a9 9 0 0 1 4.500 16.600L9.800 20.700V18.200A9 9 0 0 1 9 .3z" fill="url(#help)" />
            <text x="9" y="14.500" fontSize="15.500" fontWeight="500" fontFamily="Roboto" textAnchor="middle" fill="#fff">?</text>
          </svg>
          <span className="flex h-[34px] w-[33px] items-center justify-center rounded-full border border-[#fccf20] bg-[#fff8dc] pb-0.5 text-base font-medium text-[#fbc70f]">ЕЕ</span>
        </header>
        <main className="flex flex-1 gap-[22px] pl-[22px]">
          <section className="flex w-[1223px] shrink-0 flex-col pt-[18px]">
            <div className="flex h-[114px] shrink-0 flex-col rounded border border-[#ebebeb] bg-white pl-[17px] pr-[17px] pt-[11px]">
              <div className="flex h-[34px] items-center justify-between">
                <h3 className="text-[15px] font-medium tracking-[-0.1px] text-[#222]">Быстрые фильтры</h3>
                <span className="flex h-[34px] w-[189px] items-center justify-center gap-[11px] whitespace-nowrap rounded-full border border-[#ebebeb] text-[12.500px] font-medium tracking-[-0.1px] text-[#4688ff]"><Funnel s={12} />Все быстрые фильтры</span>
              </div>
              <span className="mt-[11px] flex h-[34px] w-[54px] items-center rounded-full border border-r-0 border-[#ebebeb] pl-[17px] text-[12.500px] text-[#222]">все</span>
            </div>
            <div className="h-[11px] shrink-0" />
            <MapView />
            <div className="flex h-3 shrink-0 items-start justify-center border-y border-[#c2c2c2] bg-white pr-0.5 pt-[3px]">
              <span className="h-1 w-[90px] rounded-full bg-[#c4c4c4]" />
            </div>
            <Schedule />
          </section>
          <Filters />
        </main>
      </div>
    </div>
  );
}
